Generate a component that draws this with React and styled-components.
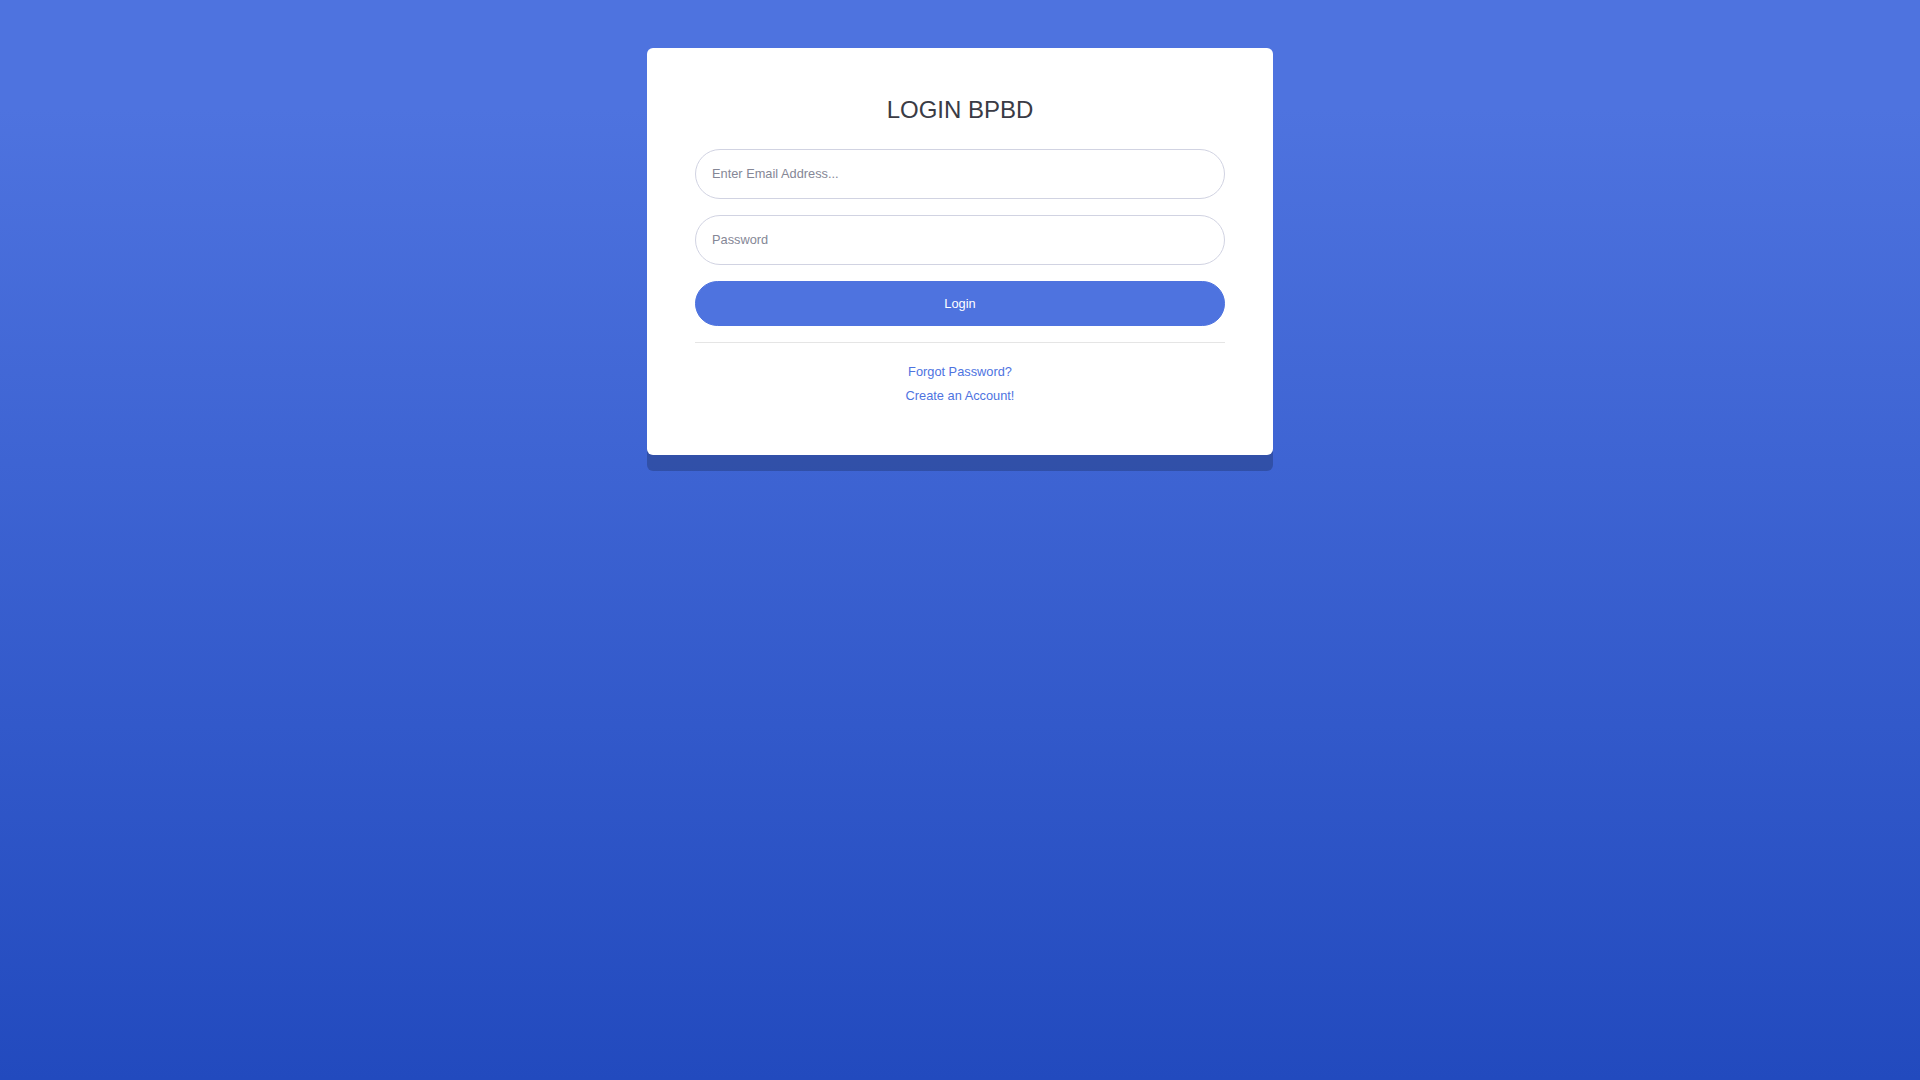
import React from "react";
import styled, { createGlobalStyle } from "styled-components";

const GlobalStyle = createGlobalStyle`
  html, body {
    margin: 0;
    padding: 0;
  }
  body {
    font-family: "Liberation Sans", Arial, sans-serif;
    font-size: 16px;
    line-height: 1.5;
    color: #858796;
  }
  * {
    box-sizing: border-box;
  }
`;

const Page = styled.div`
  min-height: 100vh;
  background-color: #4e73df;
  background-image: linear-gradient(180deg, #4e73df 10%, #224abe 100%);
  display: flex;
  justify-content: center;
  align-items: flex-start;
  padding-top: 48px;
`;

const Card = styled.div`
  width: 626px;
  background: #fff;
  border-radius: 6px;
  box-shadow: 0 16px 0 rgba(0, 0, 0, 0.2);
  padding: 48px;
`;

const Title = styled.h1`
  margin: 0 0 24px;
  font-size: 24px;
  font-weight: 400;
  line-height: 1.2;
  color: #3a3b45;
  text-align: center;
`;

const Form = styled.form`
  display: flex;
  flex-direction: column;
  gap: 16px;
`;

const Input = styled.input`
  width: 100%;
  height: 50px;
  padding: 0 16px;
  font-family: inherit;
  font-size: 12.8px;
  color: #6e707e;
  background: #fff;
  border: 1px solid #d1d3e2;
  border-radius: 160px;
  outline: none;

  &::placeholder {
    color: #858796;
  }
`;

const Button = styled.button`
  width: 100%;
  height: 45px;
  font-family: inherit;
  font-size: 12.8px;
  color: #fff;
  background: #4e73df;
  border: 1px solid #4e73df;
  border-radius: 160px;
  cursor: pointer;
`;

const Divider = styled.hr`
  margin: 16px 0;
  border: 0;
  border-top: 1px solid rgba(0, 0, 0, 0.1);
`;

const LinkRow = styled.div`
  text-align: center;
  font-size: 16px;
  line-height: 24px;
  height: 24px;
`;

const SmallLink = styled.a`
  font-size: 12.8px;
  color: #4e73df;
  text-decoration: none;
  cursor: pointer;
`;

export default function App() {
  return (
    <>
      <GlobalStyle />
      <Page>
        <Card>
          <Title>LOGIN BPBD</Title>
          <Form onSubmit={(e) => e.preventDefault()}>
            <Input type="email" placeholder="Enter Email Address..." />
            <Input type="password" placeholder="Password" />
            <Button type="submit">Login</Button>
          </Form>
          <Divider />
          <LinkRow>
            <SmallLink>Forgot Password?</SmallLink>
          </LinkRow>
          <LinkRow>
            <SmallLink>Create an Account!</SmallLink>
          </LinkRow>
        </Card>
      </Page>
    </>
  );
}
